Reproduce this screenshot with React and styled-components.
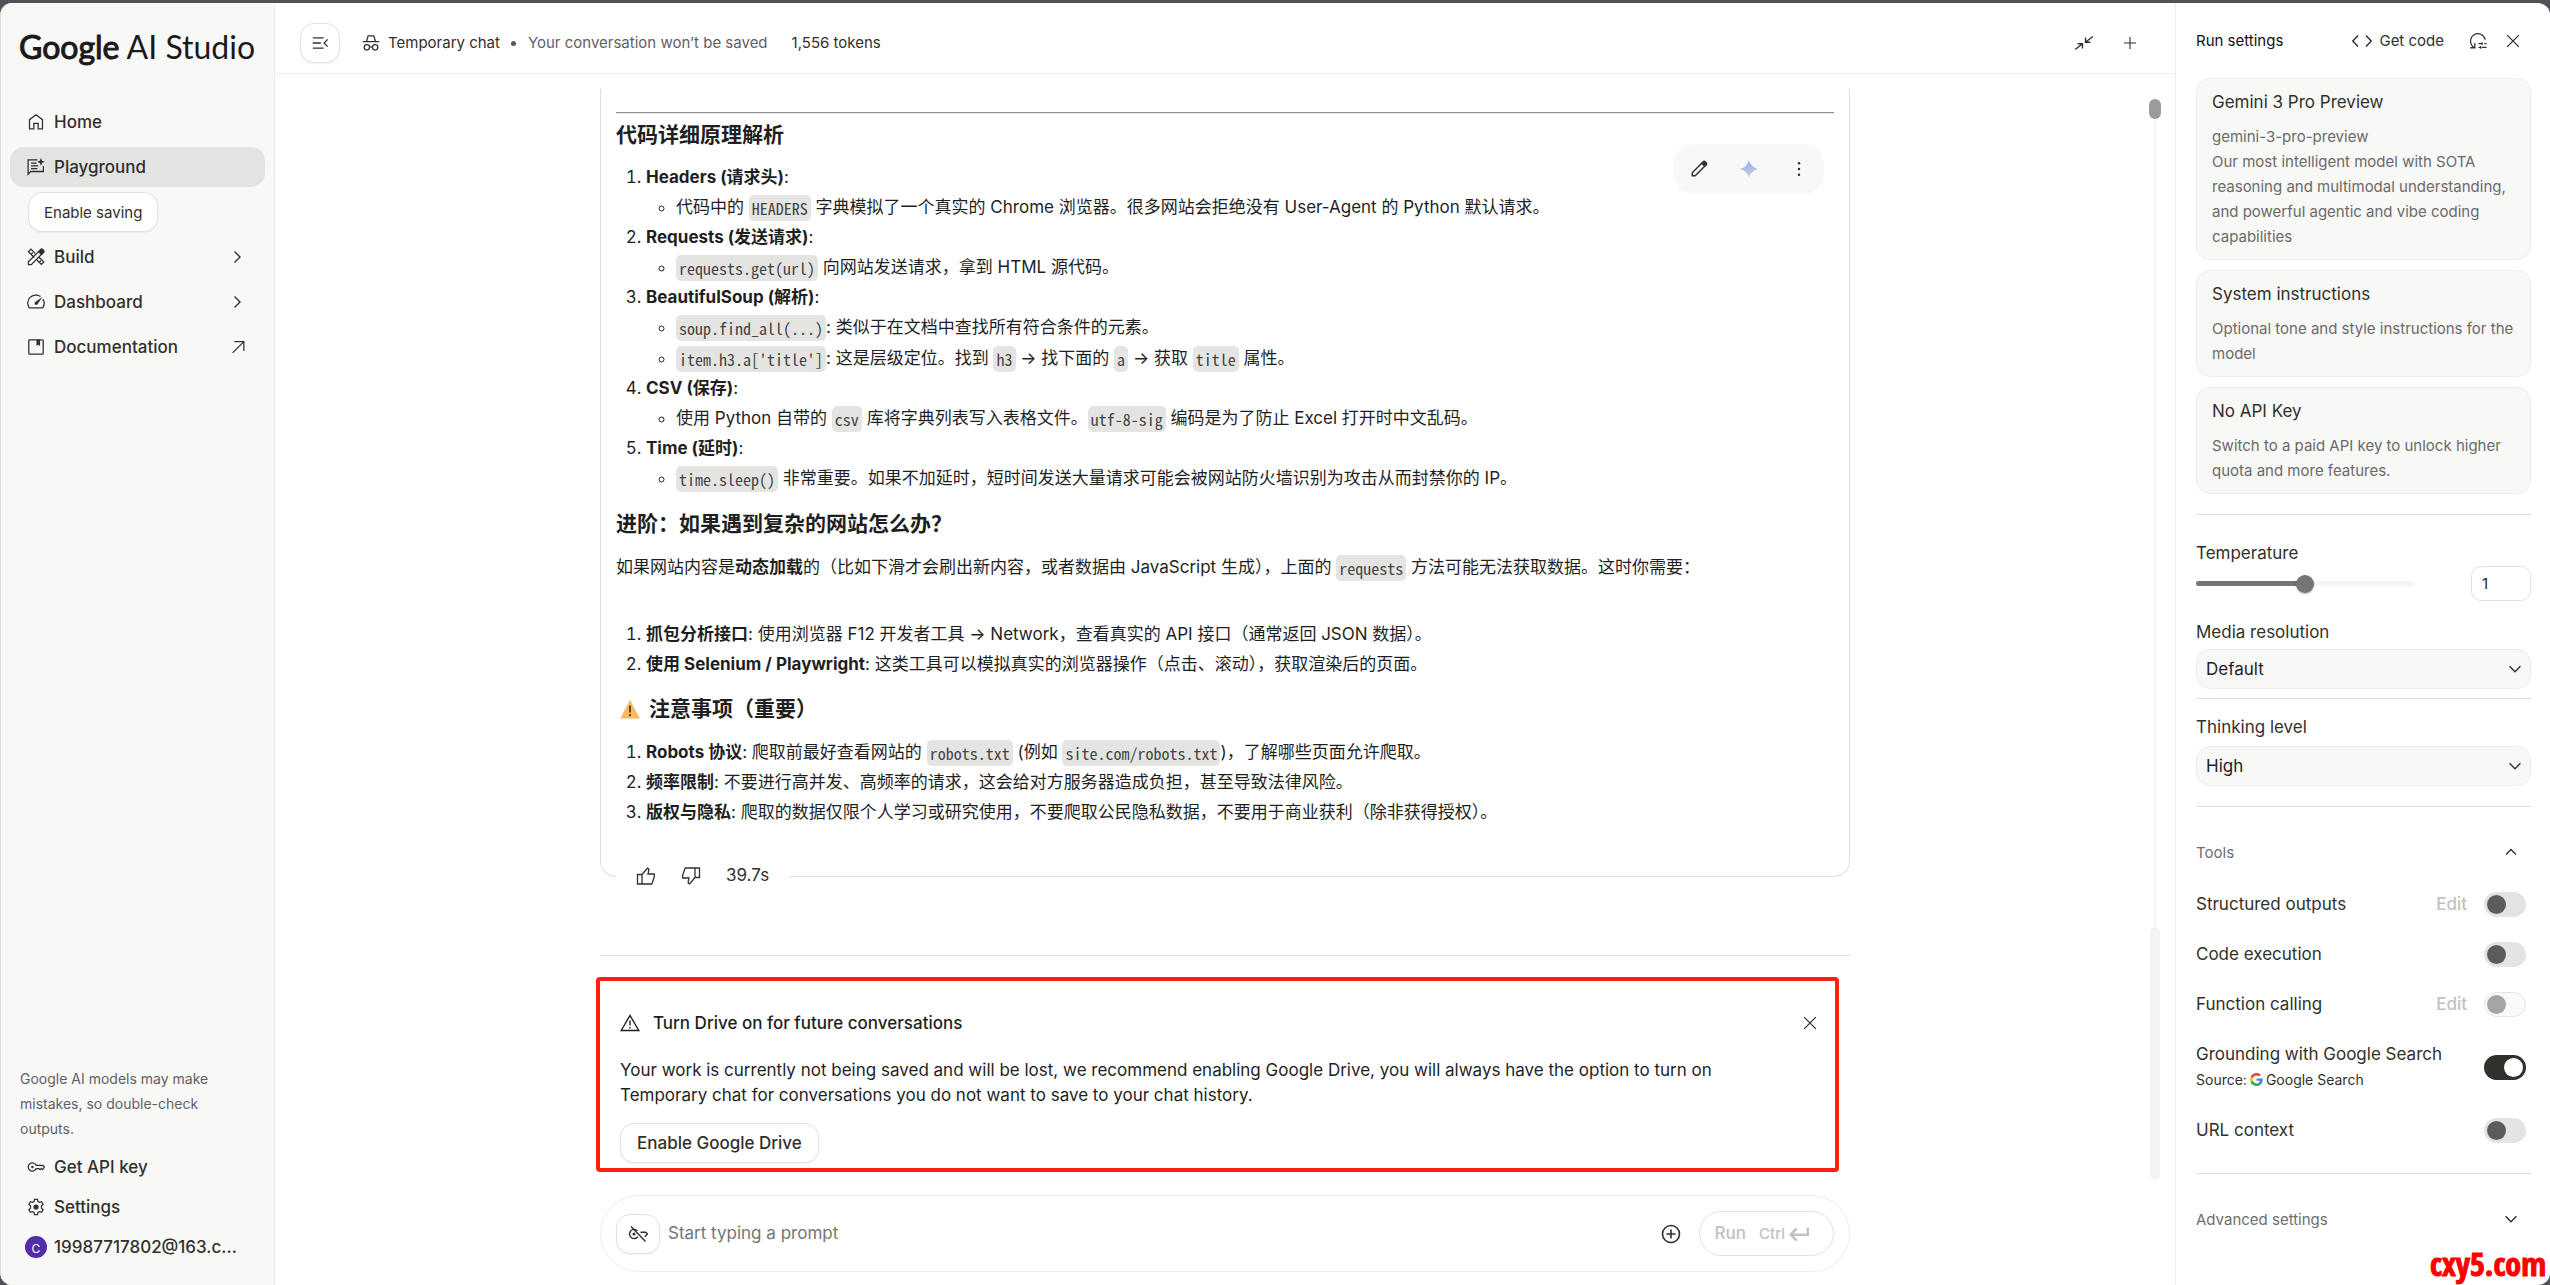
import React, { useState } from 'react';
import styled, { createGlobalStyle, css } from 'styled-components';

const sans = '"Inter", "Noto Sans CJK SC", sans-serif';
const ink = '#1f1f1f';
const soft = '#32302c';
const muted = '#5f6166';
const line = '#ececea';
const rule = '#dededc';
const surface = '#f8f8f6';

const GlobalStyle = createGlobalStyle`
  *, *::before, *::after { box-sizing: border-box; }
  body { margin: 0; background: #505257; color: ${ink}; font: 400 17px/25px ${sans}; }
  h1, h2, h3, p, ul, ol { margin: 0; padding: 0; font-weight: 400; font-size: inherit; }
  button, input, select, textarea { font: inherit; color: inherit; }
`;

/* ---------- icons ---------- */

const Svg = styled.svg`
  display: block;
  flex: none;
  width: ${(p) => p.$size || 20}px;
  height: ${(p) => p.$size || 20}px;
  fill: none;
  stroke: currentColor;
  stroke-width: ${(p) => p.$weight || 1.4};
`;

const Icon = ({ size, weight, children }) => (
  <Svg viewBox="0 0 20 20" $size={size} $weight={weight} aria-hidden="true">{children}</Svg>
);

const icons = {
  home: <path d="M2.8 17.6V7.4L10 2l7.200 5.400v10.200h-4.800v-6H7.600v6z" />,
  playground: (
    <>
      <path d="M11.500 2H1.200v16l3-3h14V9" />
      <path d="M4.500 5.600h6M4.500 8.800h8M4.500 11.800h7" />
      <path d="M15.500 0l1.300 3 3 1.300-3 1.300-1.300 3-1.300-3-3-1.300 3-1.300z" fill="currentColor" stroke="none" />
    </>
  ),
  build: (
    <>
      <path d="M8 10.500L1.600 4.100 4.400 1.300 9 6M11 13.400l4.900 4.900 2.800-2.800L13 10M4.800 6.800l1.600-1.600M13.800 15.800l1.600-1.600" />
      <path d="M1.500 18.500v-3.200L12.800 4l3.200 3.200L4.700 18.500z" />
      <path d="M13.300 3.500l2-2q1-.8 2 0l1.300 1.300q.8 1 0 2l-2 2z" fill="currentColor" />
    </>
  ),
  dashboard: (
    <>
      <path d="M15 3.900A9 9 0 0 0 2.500 16.500h15A9 9 0 0 0 17.700 6.800M12.500 2.700A9 9 0 0 0 10 2.300" />
      <path d="M17 4.500l-5.200 8q-1.300 1.600-2.900.4-1.300-1.500.3-2.900z" fill="currentColor" stroke="none" />
    </>
  ),
  book: (
    <>
      <rect x="2" y="2" width="16" height="16" rx="1" />
      <path d="M10.500 2h4v7l-2-1.500-2 1.500z" fill="currentColor" stroke="none" />
    </>
  ),
  key: (
    <>
      <path d="M10.200 8.300A4.600 4.600 0 1 0 10.200 11.700h3l1.300 1.200 1.500-1.200 1.300 1.200L19.400 10l-1.700-1.700z" />
      <circle cx="6" cy="10" r="1.400" fill="currentColor" stroke="none" />
    </>
  ),
  keyOff: (
    <>
      <path d="M9.500 6.800A4.600 4.600 0 1 0 9.800 12.800M12.500 8.300h5.200L19.400 10l-2.600 2.800M3 2.500l14.500 15" />
      <circle cx="6" cy="10" r="1.500" fill="currentColor" stroke="none" />
    </>
  ),
  gear: (
    <>
      <path d="M8.300 1.500h3.400l.5 2.400 1.700 1 2.300-.8 1.700 2.900-1.800 1.600v2.800l1.800 1.600-1.700 2.900-2.300-.8-1.700 1-.5 2.400H8.300l-.5-2.400-1.700-1-2.300.8-1.700-2.900 1.800-1.600V8.600L2.100 7l1.700-2.900 2.300.8 1.700-1z" />
      <circle cx="10" cy="10" r="2.200" fill="currentColor" />
    </>
  ),
  chevronRight: <path d="M7.500 4.500L13 10l-5.500 5.500" />,
  chevronDown: <path d="M4 7l6 6 6-6" />,
  chevronUp: <path d="M4.500 12.700L10 7.200l5.500 5.500" />,
  northEast: <path d="M4 16.500L16.200 4.300M6 4h10.500v10.500" />,
  menuOpen: <path d="M2 4.200h12M2 10h9M2 15.800h12M18.500 6L14.500 10l4 4" />,
  incognito: (
    <>
      <path d="M.8 8.500h18.400M5 8.300L6.800 2h6.400L15 8.300M8.500 14.800q1.500-1 3 0" />
      <circle cx="5.400" cy="14.800" r="3" />
      <circle cx="14.600" cy="14.800" r="3" />
    </>
  ),
  compare: <path d="M18.800 3.500l-7 5.500M11.500 4.500v4.800h5M1.200 16.500l7-5.500M8.500 15.500v-4.800h-5" />,
  plus: <path d="M10 2.500v15M2.500 10h15" />,
  pencil: (
    <>
      <path d="M2.500 17.500v-3.300L13 3.700 16.300 7 5.800 17.500z" />
      <path d="M13.800 2.800l1-1q.9-.7 1.800 0l1.600 1.600q.7.900 0 1.800l-1 1z" fill="currentColor" />
    </>
  ),
  more: (
    <g fill="currentColor" stroke="none">
      <circle cx="10" cy="3.500" r="1.400" />
      <circle cx="10" cy="10" r="1.400" />
      <circle cx="10" cy="16.500" r="1.400" />
    </g>
  ),
  thumbUp: <path d="M6 8.500L11.500 2q1.800.8 1.200 2.800L12 8h6.300v3L15.800 18H1.500V8.500H6V18" />,
  thumbDown: <path d="M14 11.500L8.500 18q-1.800-.8-1.200-2.800L8 12H1.700V9L4.200 2h14.300v9.500H14V2" />,
  warning: (
    <>
      <path d="M10 2.500L18.800 17.500H1.200z" />
      <path d="M10 7.500v5M10 14v1.600" />
    </>
  ),
  close: <path d="M3.500 3.500l13 13M16.500 3.500l-13 13" />,
  addCircle: (
    <>
      <circle cx="10" cy="10" r="8.500" />
      <path d="M10 5.500v9M5.500 10h9" />
    </>
  ),
  code: <path d="M6 4.500L.8 10 6 15.500M14 4.500l5.200 5.500-5.200 5.500" />,
  reset: (
    <>
      <path d="M5.500 17A8.200 8.200 0 1 1 18 8.500M1.500 17.500h5v-5" />
      <path d="M10.500 13h4M17 13h2.500M14.500 11.500v3M10.500 17h2M14.500 17h5M13 15.500v3" />
    </>
  ),
  enter: <path d="M19 3.500v7.200H2.500M7.500 4.500L1.800 10.700l5.700 6" />,
};

const Glyph = ({ name, size, weight }) => <Icon size={size} weight={weight}>{icons[name]}</Icon>;

const Spark = () => (
  <Svg viewBox="0 0 20 20" aria-hidden="true">
    <defs>
      <linearGradient id="spark" x1="0" y1="0" x2="0" y2="1">
        <stop offset="0.3" stopColor="#9db8f2" />
        <stop offset="1" stopColor="#dcc9cf" />
      </linearGradient>
    </defs>
    <path d="M10 1Q11.800 8.200 19 10 11.800 11.800 10 19 8.200 11.800 1 10 8.200 8.200 10 1z" fill="url(#spark)" stroke="none" />
  </Svg>
);

const CautionSign = () => (
  <Svg viewBox="0 0 20 20" aria-hidden="true">
    <path d="M10 .8L19.800 19.500H.2z" fill="#fdb95b" stroke="none" />
    <path d="M10 6.500v7M10 15v2.200" stroke="#4a3a2a" strokeWidth="1.800" />
  </Svg>
);

const GoogleMark = () => (
  <Svg viewBox="0 0 48 48" $size={13} aria-hidden="true">
    <g stroke="none">
      <path fill="#EA4335" d="M24 9.500c3.540 0 6.710 1.220 9.210 3.600l6.850-6.850C35.900 2.380 30.470 0 24 0 14.620 0 6.510 5.380 2.560 13.220l7.980 6.190C12.430 13.720 17.740 9.500 24 9.500z" />
      <path fill="#4285F4" d="M46.980 24.550c0-1.570-.15-3.090-.38-4.550H24v9.020h12.940c-.58 2.960-2.260 5.480-4.780 7.180l7.730 6c4.510-4.180 7.090-10.360 7.090-17.650z" />
      <path fill="#FBBC05" d="M10.530 28.590c-.48-1.450-.76-2.990-.76-4.590s.27-3.140.76-4.590l-7.980-6.190C.92 16.460 0 20.120 0 24c0 3.880.92 7.540 2.560 10.780l7.970-6.190z" />
      <path fill="#34A853" d="M24 48c6.480 0 11.930-2.130 15.890-5.810l-7.730-6c-2.150 1.450-4.920 2.300-8.160 2.300-6.260 0-11.570-4.220-13.470-9.910l-7.980 6.190C6.510 42.620 14.620 48 24 48z" />
    </g>
  </Svg>
);

/* ---------- shared parts ---------- */

const IconButton = styled.button`
  display: grid;
  place-items: center;
  width: 20px;
  height: 20px;
  padding: 0;
  border: 0;
  background: none;
  color: ${soft};
`;

const outlined = css`
  display: inline-flex;
  align-items: center;
  justify-content: center;
  height: 40px;
  border: 1px solid #e2e2e0;
  border-radius: 14px;
  background: #fff;
  color: ${soft};
  box-shadow: 0 1px 2px rgba(0, 0, 0, 0.06);
`;

const OutlineButton = styled.button`
  ${outlined}
  padding: 0 ${(p) => (p.$small ? 15 : 16)}px;
  font-size: ${(p) => (p.$small ? 15 : 17)}px;
  font-weight: ${(p) => (p.$small ? 400 : 500)};
`;

const SquareButton = styled.button`
  ${outlined}
  width: ${(p) => p.$w}px;
  padding: 0;
`;

/* ---------- frame ---------- */

const Frame = styled.div`
  display: grid;
  grid-template-columns: 274px minmax(0, 1fr) 375px;
  height: calc(100vh - 3px);
  min-height: 1100px;
  margin-top: 3px;
  overflow: hidden;
  border-left: 1px solid #dcdcdc;
  border-radius: 12px;
  background: #fff;
`;

/* ---------- sidebar ---------- */

const Sidebar = styled.aside`
  display: flex;
  flex-direction: column;
  border-right: 1px solid ${line};
  background: ${surface};
  padding: 23px 9px 18px;
`;

const Logo = styled.a`
  padding-left: 9px;
  color: #1a1a1a;
  font: 400 32px/42px "Lato", sans-serif;
  text-decoration: none;
  white-space: nowrap;
`;

const LogoStrong = styled.span`
  -webkit-text-stroke: 1px currentColor;
`;

const Nav = styled.nav`
  display: flex;
  flex-direction: column;
  align-items: stretch;
  gap: ${(p) => p.$gap}px;
  margin-top: ${(p) => p.$top}px;
`;

const NavItem = styled.a`
  display: flex;
  align-items: center;
  gap: 9px;
  height: 40px;
  padding: 0 18px 0 17px;
  border-radius: 14px;
  background: ${(p) => (p.$active ? '#e3e3e1' : 'transparent')};
  color: ${soft};
  font-weight: 500;
  text-decoration: none;
`;

const NavLabel = styled.span`
  flex: 1;
  white-space: nowrap;
`;

const NavAction = styled.div`
  padding-left: 18px;
`;

const Disclaimer = styled.p`
  margin-top: auto;
  padding: 0 40px 0 10px;
  color: ${muted};
  font-size: 14px;
`;

const Avatar = styled.span`
  display: grid;
  place-items: center;
  width: 22px;
  height: 22px;
  margin: 0 -2px;
  border-radius: 50%;
  background: #512da8;
  color: #fff;
  font-size: 12px;
  font-weight: 400;
`;

/* ---------- main ---------- */

const Main = styled.main`
  display: flex;
  flex-direction: column;
  min-width: 0;
  min-height: 0;
`;

const TopBar = styled.header`
  display: flex;
  align-items: center;
  height: 71px;
  flex: none;
  padding: 9px 35px 0 25px;
  border-bottom: 1px solid ${line};
  font-size: 15px;
  color: ${soft};
`;

const ChatTitle = styled.div`
  display: flex;
  align-items: center;
  gap: 8px;
  margin-left: 22px;
  white-space: nowrap;
`;

const Note = styled.span`
  color: ${muted};
  &::before {
    content: '';
    display: inline-block;
    width: 5px;
    height: 5px;
    margin: 0 12px 2px 3px;
    border-radius: 50%;
    background: #55575c;
  }
`;

const Tokens = styled.span`
  margin-left: 24px;
`;

const TopActions = styled.div`
  display: flex;
  gap: 26px;
  margin-left: auto;
`;

const Body = styled.div`
  flex: 1;
  min-height: 0;
  display: grid;
  grid-template-columns: 1fr minmax(0, 1250px) 1fr;
  grid-template-rows: minmax(0, 1fr) auto;
  padding: 15px 0 13px;
`;

const Column = styled.div`
  grid-column: 2;
  display: flex;
  flex-direction: column;
  min-height: 0;
`;

const Rail = styled.div`
  grid-column: 3;
  justify-self: end;
  display: flex;
  flex-direction: column;
  align-items: center;
  width: 12px;
  margin: 10px 14px 15px 0;
`;

const RailThumb = styled.div`
  width: 12px;
  height: 20px;
  border-radius: 6px;
  background: #9b9b9b;
`;

const RailTrack = styled.div`
  flex: 1;
  width: 2px;
  background: #f3f3f1;
`;

const RailTurn = styled.div`
  width: 10px;
  height: 253px;
  border-radius: 5px;
  background: #f4f4f2;
`;

const Card = styled.article`
  position: relative;
  flex: none;
  padding: 23px 15px 49px;
  border: 1px solid ${rule};
  border-top: 0;
  border-radius: 0 0 16px 16px;
`;

const CardRule = styled.hr`
  margin: 0;
  border: 0;
  border-top: 1px solid #8f8f8f;
  border-bottom: 1px solid #ededed;
`;

const Floating = styled.div`
  position: absolute;
  top: 55px;
  right: 25px;
  display: flex;
  align-items: center;
  justify-content: space-between;
  width: 150px;
  height: 50px;
  padding: 0 15px;
  border-radius: 20px;
  background: ${surface};
`;

const Feedback = styled.div`
  position: absolute;
  left: 15px;
  bottom: -12px;
  display: flex;
  align-items: center;
  gap: 25px;
  padding: 0 20px;
  background: #fff;
  color: ${soft};
`;

const H3 = styled.h3`
  display: flex;
  align-items: center;
  gap: 9px;
  margin: 15px 0 13px;
  font-size: 21px;
  font-weight: 700;
  line-height: 30px;
  &:first-of-type { margin-top: 6px; }
`;

const EmojiSlot = styled.span`
  padding-left: 4px;
`;

const P = styled.p`
  line-height: 31px;
  margin-bottom: 36px;
`;

const Ol = styled.ol`
  padding-left: 30px;
  line-height: ${(p) => p.$lh || 29}px;
`;

const Ul = styled.ul`
  padding-left: 30px;
  list-style: circle;
  line-height: 31px;
`;

const B = styled.strong`
  font-weight: 700;
`;

const Code = styled.code`
  display: inline-block;
  height: 26px;
  padding: 0 3px;
  border-radius: 5px;
  background: #e4e4e2;
  color: #454543;
  font: 400 16px/26px "Noto Sans Mono CJK SC", "Liberation Mono", monospace;
  vertical-align: middle;
`;

const Divider = styled.hr`
  width: 100%;
  height: 1px;
  margin: ${(p) => p.$m || '0'};
  border: 0;
  flex: none;
  background: ${rule};
`;

const Banner = styled.section`
  flex: none;
  margin: 21px 11px 23px -4px;
  padding: 27px 15px 5px 20px;
  border: 4px solid #ff2010;
  border-radius: 4px;
`;

const BannerHead = styled.header`
  display: flex;
  align-items: center;
  gap: 13px;
  height: 30px;
  margin-bottom: 20px;
`;

const BannerTitle = styled.h2`
  flex: 1;
  font-weight: 500;
`;

const BannerText = styled.p`
  max-width: 1140px;
  margin-bottom: 15px;
`;

const Composer = styled.form`
  grid-column: 2;
  display: flex;
  align-items: center;
  height: 77px;
  padding: 0 15px;
  border: 1px solid ${line};
  border-radius: 39px;
`;

const PromptInput = styled.input`
  flex: 1;
  min-width: 0;
  margin: 0 12px 0 8px;
  padding: 0;
  border: 0;
  outline: 0;
  background: none;
  &::placeholder { color: #757575; opacity: 1; }
`;

const RunButton = styled.button`
  display: flex;
  align-items: center;
  height: 45px;
  margin-left: 18px;
  padding: 0 24px 0 15px;
  border: 1px solid #e2e2e0;
  border-radius: 23px;
  background: none;
  color: #c3c1bf;
  font-weight: 500;
`;

const Shortcut = styled.span`
  display: flex;
  align-items: center;
  gap: 4px;
  margin-left: 13px;
  font-size: 15px;
`;

/* ---------- run settings ---------- */

const Panel = styled.aside`
  display: flex;
  flex-direction: column;
  padding: 0 19px 0 20px;
  border-left: 1px solid ${line};
`;

const PanelHead = styled.header`
  display: flex;
  align-items: center;
  height: 75px;
  padding-right: 8px;
  font-size: 15px;
`;

const PanelTitle = styled.h2`
  flex: 1;
  color: #111;
`;

const CodeButton = styled.button`
  display: flex;
  align-items: center;
  gap: 7px;
  margin-right: 24px;
  padding: 0;
  border: 0;
  background: none;
  color: ${soft};
`;

const PanelTools = styled.div`
  display: flex;
  gap: 15px;
`;

const Cards = styled.div`
  display: flex;
  flex-direction: column;
  gap: 10px;
`;

const InfoCard = styled.button`
  display: block;
  padding: 11px 14px 10px 15px;
  border: 1px solid ${line};
  border-radius: 14px;
  background: ${surface};
  color: ${soft};
  text-align: left;
`;

const InfoTitle = styled.span`
  display: block;
  margin-bottom: 9px;
`;

const InfoText = styled.span`
  display: block;
  color: #6a6a6a;
  font-size: 15px;
`;

const FieldLabel = styled.label`
  display: block;
  color: ${soft};
`;

const SliderRow = styled.div`
  display: flex;
  align-items: center;
  justify-content: space-between;
  margin-bottom: 19px;
`;

const Slider = styled.input`
  appearance: none;
  width: 65%;
  height: 5px;
  margin: 0;
  border-radius: 3px;
  background: linear-gradient(90deg, #757575 50%, #f5f5f5 50%);
  &::-webkit-slider-thumb {
    appearance: none;
    width: 18px;
    height: 18px;
    border-radius: 50%;
    background: #757575;
    box-shadow: 0 1px 2px rgba(0, 0, 0, 0.3);
  }
`;

const NumberInput = styled.input`
  width: 60px;
  height: 35px;
  padding: 0 10px;
  border: 1px solid #e2e2e0;
  border-radius: 10px;
  background: #fff;
  font-size: 15px;
  appearance: textfield;
  &::-webkit-inner-spin-button { display: none; }
`;

const SelectWrap = styled.div`
  display: grid;
  align-items: center;
  margin-top: ${(p) => p.$top}px;
  > * { grid-area: 1 / 1; }
  > svg { justify-self: end; margin-right: 7px; pointer-events: none; color: ${soft}; }
`;

const Select = styled.select`
  appearance: none;
  width: 100%;
  height: 40px;
  padding: 0 30px 0 9px;
  border: 1px solid ${line};
  border-radius: 14px;
  background: ${surface};
`;

const Disclosure = styled.button`
  display: flex;
  align-items: center;
  justify-content: space-between;
  width: 100%;
  height: 40px;
  padding: 0 11px 0 0;
  border: 0;
  background: none;
  color: #6e6e6e;
  font-size: 15px;
  > svg { color: ${soft}; }
`;

const ToolList = styled.div`
  padding-top: 7px;
`;

const ToolRow = styled.div`
  display: flex;
  align-items: center;
  height: ${(p) => (p.$tall ? 76 : 50)}px;
  padding-right: 5px;
`;

const ToolName = styled.label`
  flex: 1;
  color: ${soft};
  white-space: nowrap;
`;

const Source = styled.span`
  display: flex;
  align-items: center;
  gap: 3px;
  font-size: 14px;
`;

const EditButton = styled.button`
  margin-right: 17px;
  padding: 0;
  border: 0;
  background: none;
  color: #c3c1c1;
  font-weight: 500;
`;

const Toggle = styled.input`
  appearance: none;
  display: flex;
  align-items: center;
  flex: none;
  width: 42px;
  height: 25px;
  margin: 0;
  padding: 0 3px;
  border-radius: 13px;
  background: #e3e3e1;
  &::before {
    content: '';
    width: 19px;
    height: 19px;
    border-radius: 50%;
    background: #5c5c5e;
  }
  &:checked {
    justify-content: flex-end;
    background: #32302c;
  }
  &:checked::before { background: #fff; }
  &:disabled {
    padding: 0 2px;
    border: 1px solid #e6e6e4;
    background: #fafafa;
  }
  &:disabled::before { background: #a5a5a5; }
`;

const Watermark = styled.div`
  position: absolute;
  right: 4px;
  bottom: 3px;
  color: #fe0000;
  font: 800 32px/36px "Open Sans Condensed", "Roboto Condensed", "Open Sans", sans-serif;
  -webkit-text-stroke: 1px #fe0000;
`;

/* ---------- content ---------- */

const principles = [
  ['Headers (请求头)', [<>代码中的 <Code>HEADERS</Code> 字典模拟了一个真实的 Chrome 浏览器。很多网站会拒绝没有 User-Agent 的 Python 默认请求。</>]],
  ['Requests (发送请求)', [<><Code>requests.get(url)</Code> 向网站发送请求，拿到 HTML 源代码。</>]],
  ['BeautifulSoup (解析)', [
    <><Code>soup.find_all(...)</Code>: 类似于在文档中查找所有符合条件的元素。</>,
    <><Code>item.h3.a['title']</Code>: 这是层级定位。找到 <Code>h3</Code> → 找下面的 <Code>a</Code> → 获取 <Code>title</Code> 属性。</>,
  ]],
  ['CSV (保存)', [<>使用 Python 自带的 <Code>csv</Code> 库将字典列表写入表格文件。<Code>utf-8-sig</Code> 编码是为了防止 Excel 打开时中文乱码。</>]],
  ['Time (延时)', [<><Code>time.sleep()</Code> 非常重要。如果不加延时，短时间发送大量请求可能会被网站防火墙识别为攻击从而封禁你的 IP。</>]],
];

const infoCards = [
  ['Gemini 3 Pro Preview', ['gemini-3-pro-preview', 'Our most intelligent model with SOTA reasoning and multimodal understanding, and powerful agentic and vibe coding capabilities']],
  ['System instructions', ['Optional tone and style instructions for the model']],
  ['No API Key', ['Switch to a paid API key to unlock higher quota and more features.']],
];

const Tool = ({ id, name, edit, disabled, source, on: initial = false }) => {
  const [on, setOn] = useState(initial);
  return (
    <ToolRow $tall={Boolean(source)}>
      <ToolName htmlFor={id}>
        {name}
        {source && <Source>Source: <GoogleMark />{source}</Source>}
      </ToolName>
      {edit && <EditButton type="button" disabled>Edit</EditButton>}
      <Toggle id={id} type="checkbox" role="switch" checked={on} disabled={disabled} onChange={() => setOn(!on)} />
    </ToolRow>
  );
};

const SidebarView = () => (
  <Sidebar>
    <Logo href="#home"><LogoStrong>Google</LogoStrong> AI Studio</Logo>
    <Nav $gap={5} $top={34}>
      <NavItem href="#home"><Glyph name="home" size={18} /><NavLabel>Home</NavLabel></NavItem>
      <NavItem href="#playground" $active><Glyph name="playground" size={18} /><NavLabel>Playground</NavLabel></NavItem>
      <NavAction><OutlineButton $small type="button">Enable saving</OutlineButton></NavAction>
      <NavItem href="#build"><Glyph name="build" size={18} /><NavLabel>Build</NavLabel><Glyph name="chevronRight" /></NavItem>
      <NavItem href="#dashboard"><Glyph name="dashboard" size={18} /><NavLabel>Dashboard</NavLabel><Glyph name="chevronRight" /></NavItem>
      <NavItem href="#docs"><Glyph name="book" size={18} /><NavLabel>Documentation</NavLabel><Glyph name="northEast" size={18} /></NavItem>
    </Nav>
    <Disclaimer>Google AI models may make mistakes, so double-check outputs.</Disclaimer>
    <Nav $gap={0} $top={6}>
      <NavItem href="#key"><Glyph name="key" size={18} /><NavLabel>Get API key</NavLabel></NavItem>
      <NavItem href="#settings"><Glyph name="gear" size={18} /><NavLabel>Settings</NavLabel></NavItem>
      <NavItem href="#account"><Avatar>C</Avatar><NavLabel>19987717802@163.c...</NavLabel></NavItem>
    </Nav>
  </Sidebar>
);

const Answer = () => (
  <Card>
    <CardRule />
    <Floating>
      <IconButton type="button" aria-label="Edit"><Glyph name="pencil" size={18} weight={1.6} /></IconButton>
      <IconButton type="button" aria-label="Rerun"><Spark /></IconButton>
      <IconButton type="button" aria-label="More"><Glyph name="more" size={18} /></IconButton>
    </Floating>
    <H3>代码详细原理解析</H3>
    <Ol>
      {principles.map(([title, notes]) => (
        <li key={title}>
          <B>{title}</B>:
          <Ul>{notes.map((note, i) => <li key={i}>{note}</li>)}</Ul>
        </li>
      ))}
    </Ol>
    <H3>进阶：如果遇到复杂的网站怎么办？</H3>
    <P>如果网站内容是<B>动态加载</B>的（比如下滑才会刷出新内容，或者数据由 JavaScript 生成），上面的 <Code>requests</Code> 方法可能无法获取数据。这时你需要：</P>
    <Ol $lh={30}>
      <li><B>抓包分析接口</B>: 使用浏览器 F12 开发者工具 → Network，查看真实的 API 接口（通常返回 JSON 数据）。</li>
      <li><B>使用 Selenium / Playwright</B>: 这类工具可以模拟真实的浏览器操作（点击、滚动），获取渲染后的页面。</li>
    </Ol>
    <H3><EmojiSlot><CautionSign /></EmojiSlot>注意事项（重要）</H3>
    <Ol $lh={30}>
      <li><B>Robots 协议</B>: 爬取前最好查看网站的 <Code>robots.txt</Code> (例如 <Code>site.com/robots.txt</Code>)，了解哪些页面允许爬取。</li>
      <li><B>频率限制</B>: 不要进行高并发、高频率的请求，这会给对方服务器造成负担，甚至导致法律风险。</li>
      <li><B>版权与隐私</B>: 爬取的数据仅限个人学习或研究使用，不要爬取公民隐私数据，不要用于商业获利（除非获得授权）。</li>
    </Ol>
    <Feedback>
      <IconButton type="button" aria-label="Good response"><Glyph name="thumbUp" weight={1.3} /></IconButton>
      <IconButton type="button" aria-label="Bad response"><Glyph name="thumbDown" weight={1.3} /></IconButton>
      <span>39.7s</span>
    </Feedback>
  </Card>
);

const MainView = () => (
  <Main>
    <TopBar>
      <SquareButton type="button" $w={40} aria-label="Collapse menu"><Glyph name="menuOpen" size={18} /></SquareButton>
      <ChatTitle><Glyph name="incognito" size={18} />Temporary chat<Note>Your conversation won’t be saved</Note></ChatTitle>
      <Tokens>1,556 tokens</Tokens>
      <TopActions>
        <IconButton type="button" aria-label="Compare"><Glyph name="compare" /></IconButton>
        <IconButton type="button" aria-label="New chat"><Glyph name="plus" size={16} /></IconButton>
      </TopActions>
    </TopBar>
    <Body>
      <Column>
        <Answer />
        <Divider $m="auto 0 0" />
        <Banner>
          <BannerHead>
            <Glyph name="warning" />
            <BannerTitle>Turn Drive on for future conversations</BannerTitle>
            <IconButton type="button" aria-label="Dismiss"><Glyph name="close" size={18} /></IconButton>
          </BannerHead>
          <BannerText>
            Your work is currently not being saved and will be lost, we recommend enabling Google Drive, you will always have the option to turn on<br />
            Temporary chat for conversations you do not want to save to your chat history.
          </BannerText>
          <OutlineButton type="button">Enable Google Drive</OutlineButton>
        </Banner>
      </Column>
      <Rail><RailThumb /><RailTrack /><RailTurn /></Rail>
      <Composer>
        <SquareButton type="button" $w={44} aria-label="No API key"><Glyph name="keyOff" /></SquareButton>
        <PromptInput aria-label="Prompt" placeholder="Start typing a prompt" />
        <IconButton type="button" aria-label="Add file"><Glyph name="addCircle" weight={1.6} /></IconButton>
        <RunButton type="button">Run<Shortcut>Ctrl<Glyph name="enter" weight={2.6} /></Shortcut></RunButton>
      </Composer>
    </Body>
  </Main>
);

const PanelView = () => (
  <Panel>
    <PanelHead>
      <PanelTitle>Run settings</PanelTitle>
      <CodeButton type="button"><Glyph name="code" />Get code</CodeButton>
      <PanelTools>
        <IconButton type="button" aria-label="Reset settings"><Glyph name="reset" size={18} /></IconButton>
        <IconButton type="button" aria-label="Close panel"><Glyph name="close" size={18} /></IconButton>
      </PanelTools>
    </PanelHead>
    <Cards>
      {infoCards.map(([title, lines]) => (
        <InfoCard type="button" key={title}>
          <InfoTitle>{title}</InfoTitle>
          {lines.map((text) => <InfoText key={text}>{text}</InfoText>)}
        </InfoCard>
      ))}
    </Cards>
    <Divider $m="20px 0 26px" />
    <FieldLabel htmlFor="temp">Temperature</FieldLabel>
    <SliderRow>
      <Slider id="temp" type="range" min="0" max="2" step="0.05" defaultValue="1" />
      <NumberInput type="number" aria-label="Temperature value" defaultValue="1" />
    </SliderRow>
    <FieldLabel htmlFor="media">Media resolution</FieldLabel>
    <SelectWrap $top={4}>
      <Select id="media" defaultValue="Default"><option>Default</option></Select>
      <Glyph name="chevronDown" size={18} weight={1.6} />
    </SelectWrap>
    <Divider $m="9px 0 16px" />
    <FieldLabel htmlFor="thinking">Thinking level</FieldLabel>
    <SelectWrap $top={6}>
      <Select id="thinking" defaultValue="High"><option>High</option></Select>
      <Glyph name="chevronDown" size={18} weight={1.6} />
    </SelectWrap>
    <Divider $m="20px 0 25px" />
    <Disclosure type="button">Tools<Glyph name="chevronUp" size={18} weight={1.6} /></Disclosure>
    <ToolList>
      <Tool id="structured" name="Structured outputs" edit />
      <Tool id="execution" name="Code execution" />
      <Tool id="functions" name="Function calling" edit disabled />
      <Tool id="grounding" name="Grounding with Google Search" source="Google Search" on />
      <Tool id="url" name="URL context" />
    </ToolList>
    <Divider $m="18px 0 25px" />
    <Disclosure type="button">Advanced settings<Glyph name="chevronDown" size={18} weight={1.6} /></Disclosure>
  </Panel>
);

export default function App() {
  return (
    <>
      <GlobalStyle />
      <Frame>
        <SidebarView />
        <MainView />
        <PanelView />
      </Frame>
      <Watermark>cxy5.com</Watermark>
    </>
  );
}
